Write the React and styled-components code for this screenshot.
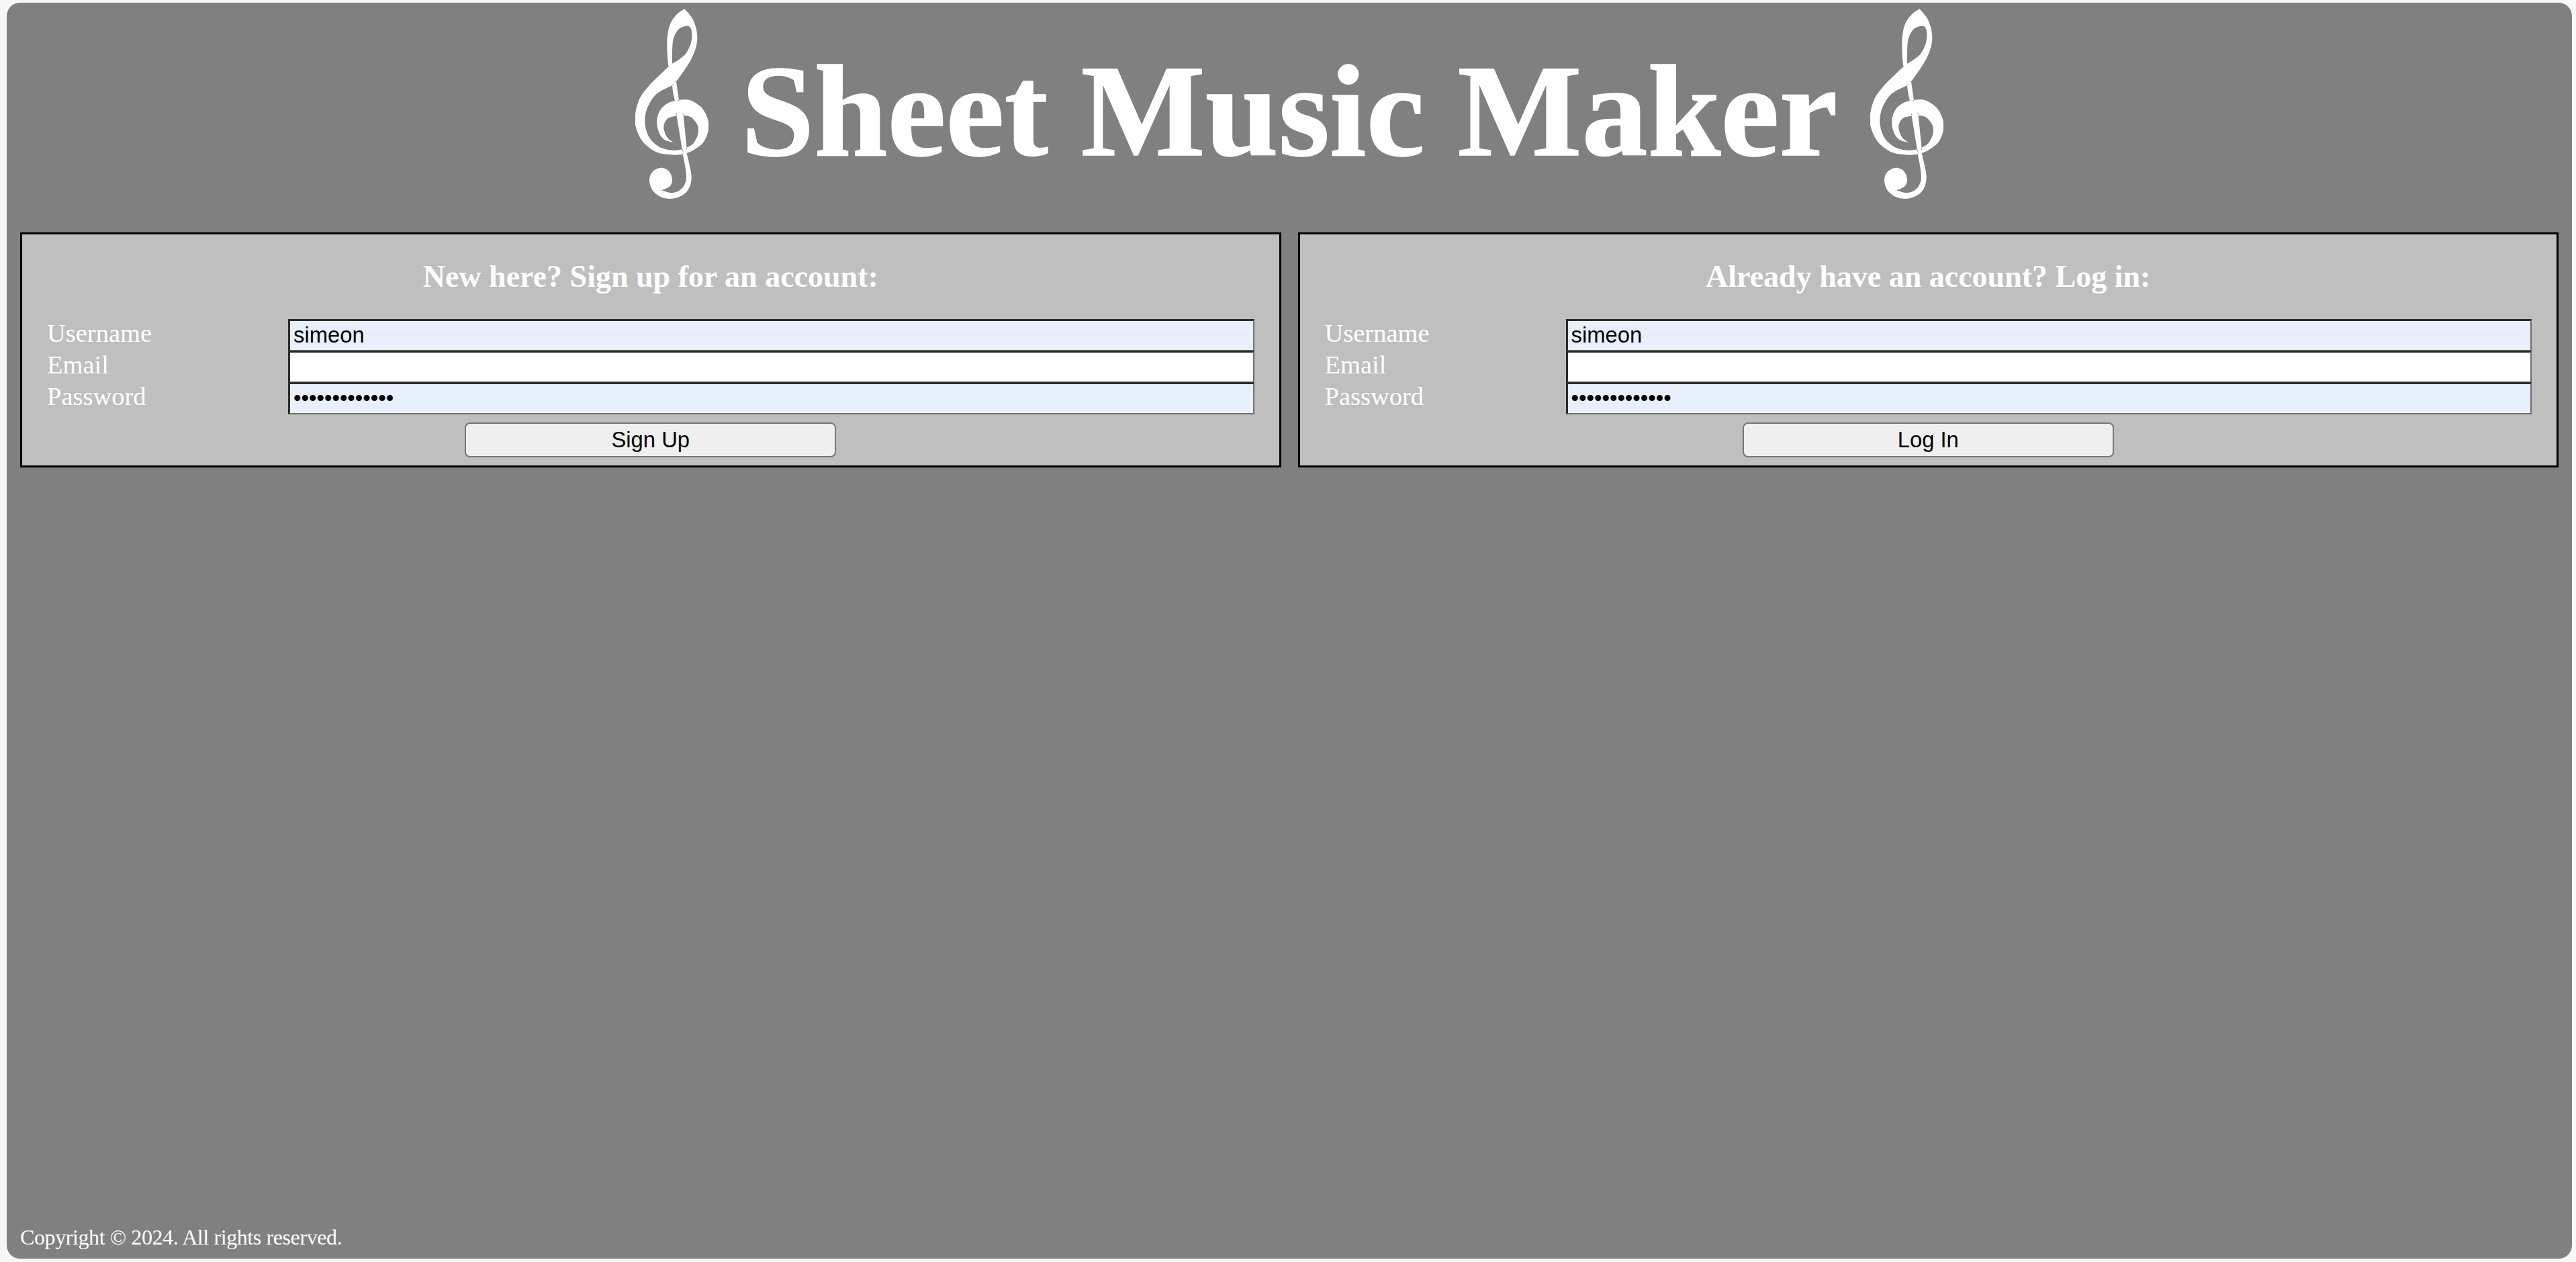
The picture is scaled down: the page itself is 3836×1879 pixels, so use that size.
import React from 'react';
import styled, { createGlobalStyle } from 'styled-components';

const SERIF = '"Liberation Serif", "Times New Roman", serif';
const SANS = '"Liberation Sans", Arial, sans-serif';

const GlobalStyle = createGlobalStyle`
  html, body {
    margin: 0;
    height: 100%;
    background: #f7f7f7;
  }
  * {
    box-sizing: border-box;
  }
`;

const Page = styled.div`
  display: flex;
  flex-direction: column;
  height: 1870px;
  margin: 4px 6px 0 10px;
  padding: 0 20px;
  background: #808080;
  border-radius: 20px;
  font-family: ${SERIF};
  color: #fff;
`;

const Masthead = styled.header`
  display: flex;
  justify-content: center;
  align-items: flex-start;
  gap: 49px;
  height: 342px;
  padding-top: 9px;
`;

const Title = styled.h1`
  margin: 0;
  padding-top: 54px;
  font-size: 196px;
  line-height: 1;
  font-weight: bold;
  white-space: nowrap;
  -webkit-text-stroke: 1.5px #fff;
`;

const ClefIcon = styled.svg`
  display: block;
  flex: none;
  width: 109px;
  height: 283px;
  fill: #fff;
`;

const Panels = styled.main`
  display: grid;
  grid-template-columns: 1fr 1fr;
  gap: 25px;
`;

const Panel = styled.form`
  display: flex;
  flex-direction: column;
  height: 350px;
  padding: 39px 37px 0;
  background: #bfbfbf;
  border: 3px solid #000;
`;

const PanelTitle = styled.h3`
  margin: 0 0 40px;
  font-size: 46px;
  line-height: 47px;
  font-weight: bold;
  text-align: center;
`;

const Row = styled.label`
  display: grid;
  grid-template-columns: 359px 1fr;
  align-items: start;
  height: 47px;
  font-size: 38.5px;
  line-height: 42px;
`;

const Field = styled.input`
  display: block;
  width: 100%;
  height: 48px;
  padding: 0 5px 2px;
  font-family: ${SANS};
  font-size: 32.8px;
  color: #000;
  background: ${(props) => (props.$filled ? '#e8f0fe' : '#fff')};
  border-style: solid;
  border-width: 3px 2px 2px 3px;
  border-color: #2b2b2b #6f6f6f #6f6f6f #2b2b2b;
  border-radius: 0;
  outline: none;
`;

const SubmitButton = styled.button`
  display: block;
  align-self: center;
  width: 553px;
  height: 52px;
  margin-top: 13px;
  font-family: ${SANS};
  font-size: 32.8px;
  color: #000;
  background: #efefef;
  border: 2px solid #767676;
  border-radius: 8px;
`;

const Footer = styled.footer`
  margin-top: auto;
  padding-bottom: 16px;
  font-size: 32px;
  line-height: 1;
  letter-spacing: -0.4px;
`;

// clef outline traced from the picture, doubled points are sharp corners
const CLEF_SHAPES = [
  [
    [355, 40], [355, 40], [385, 75], [405, 120], [412, 170], [405, 215], [385, 265], [350, 320],
    [318, 365], [318, 365], [330, 447], [330, 447], [380, 448], [430, 480], [458, 530], [462, 580],
    [440, 635], [400, 668], [365, 685], [365, 685], [378, 740], [386, 790], [378, 835], [350, 870],
    [300, 888], [250, 880], [212, 850], [198, 805], [212, 768], [250, 750], [285, 765], [300, 800],
    [290, 832], [253, 850], [253, 850], [300, 862], [340, 845], [362, 805], [358, 745], [347, 690],
    [347, 690], [300, 692], [230, 680], [170, 635], [138, 570], [135, 510], [155, 440], [195, 385],
    [250, 330], [283, 298], [283, 298], [278, 240], [278, 170], [290, 110], [320, 65],
  ],
  [
    [300, 285], [300, 285], [300, 230], [305, 175], [325, 135], [350, 120], [378, 120], [388, 150],
    [383, 195], [362, 238], [335, 263],
  ],
  [
    [300, 382], [300, 382], [305, 420], [312, 450], [312, 450], [280, 462], [248, 490], [232, 535],
    [238, 585], [262, 622], [305, 637], [305, 637], [275, 610], [262, 565], [280, 530], [320, 518],
    [320, 518], [345, 668], [345, 668], [300, 672], [240, 655], [195, 610], [178, 545], [190, 480],
    [230, 420],
  ],
  [
    [350, 515], [350, 515], [385, 525], [413, 560], [415, 600], [395, 640], [365, 660], [365, 660],
  ],
];

const smoothPath = (points) => {
  const n = points.length;
  const at = (i) => points[(i + n) % n];
  let d = `M${points[0][0]} ${points[0][1]}`;
  for (let i = 0; i < n; i++) {
    const [p0, p1, p2, p3] = [at(i - 1), at(i), at(i + 1), at(i + 2)];
    const c1 = [p1[0] + (p2[0] - p0[0]) / 6, p1[1] + (p2[1] - p0[1]) / 6];
    const c2 = [p2[0] - (p3[0] - p1[0]) / 6, p2[1] - (p3[1] - p1[1]) / 6];
    d += `C${c1[0]} ${c1[1]} ${c2[0]} ${c2[1]} ${p2[0]} ${p2[1]}`;
  }
  return d + 'Z';
};

const CLEF_PATH = CLEF_SHAPES.map(smoothPath).join(' ');

const Clef = () => (
  <ClefIcon viewBox="135 40 327 848" aria-hidden="true">
    <path fillRule="evenodd" d={CLEF_PATH} />
  </ClefIcon>
);

const AccountForm = ({ title, action }) => (
  <Panel onSubmit={(e) => e.preventDefault()}>
    <PanelTitle>{title}</PanelTitle>
    <Row>
      Username
      <Field type="text" defaultValue="simeon" $filled />
    </Row>
    <Row>
      Email
      <Field type="text" />
    </Row>
    <Row>
      Password
      <Field type="password" defaultValue="simeonsimeon1" $filled />
    </Row>
    <SubmitButton type="submit">{action}</SubmitButton>
  </Panel>
);

export default function App() {
  return (
    <>
      <GlobalStyle />
      <Page>
        <Masthead>
          <Clef />
          <Title>Sheet Music Maker</Title>
          <Clef />
        </Masthead>
        <Panels>
          <AccountForm title="New here? Sign up for an account:" action="Sign Up" />
          <AccountForm title="Already have an account? Log in:" action="Log In" />
        </Panels>
        <Footer>Copyright © 2024. All rights reserved.</Footer>
      </Page>
    </>
  );
}
